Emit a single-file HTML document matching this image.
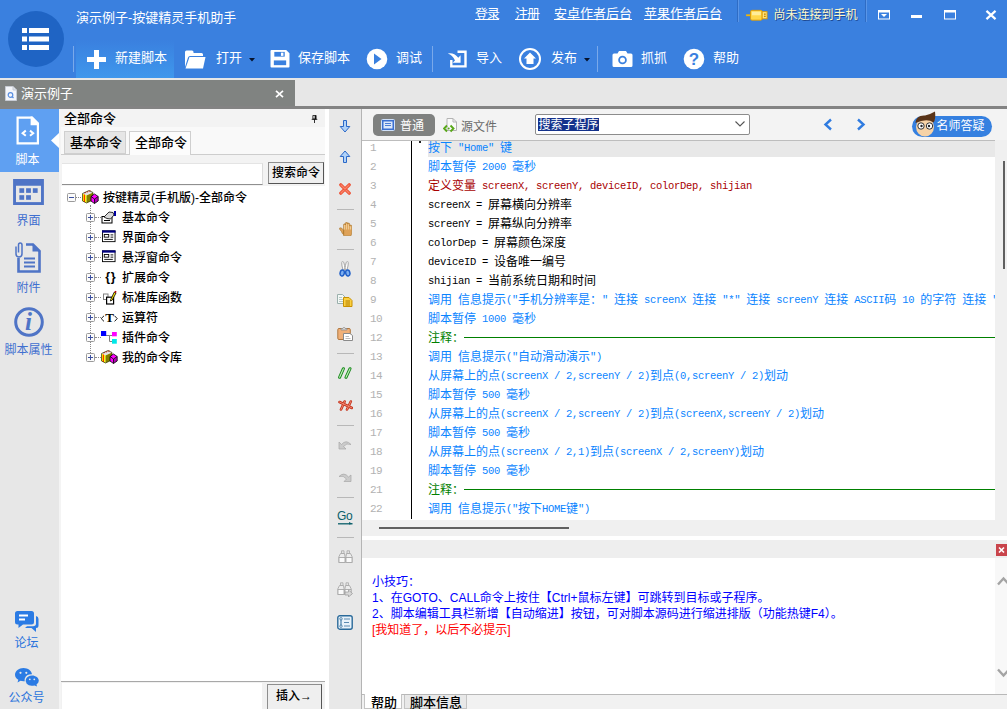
<!DOCTYPE html><html lang="zh-CN"><head><meta charset="utf-8"><title>演示例子-按键精灵手机助手</title><style>
*{box-sizing:border-box;margin:0;padding:0}
html,body{width:1007px;height:709px;overflow:hidden;background:#fff}
body{position:relative;font-family:"Liberation Sans","Noto Sans CJK SC",sans-serif;font-size:12px;color:#000}
.a{position:absolute}
.t{position:absolute;white-space:nowrap;line-height:1}
#top{left:0;top:0;width:1007px;height:78px;background:#3a80df}
.tb{position:absolute;top:51px;font-size:13px;color:#fff;white-space:nowrap;line-height:14px}
.lnk{position:absolute;top:7px;font-size:13px;color:#fff;text-decoration:underline;white-space:nowrap;line-height:14px}
.sep{position:absolute;top:46px;width:1px;height:26px;background:#7aa9ea}
.side{position:absolute;font-size:12px;color:#3f6fd0;white-space:nowrap;line-height:12px;text-align:center;width:57px;left:0}
.tr{position:absolute;font-size:12px;line-height:14px;white-space:nowrap;color:#000;font-weight:500}
.ln{position:absolute;left:370px;width:30px;font-family:"Liberation Mono",monospace;font-size:11px;letter-spacing:-.6px;line-height:19px;color:#b2b2b2;white-space:nowrap}
.cl{position:absolute;left:428px;font-size:12px;line-height:19px;height:19px;white-space:nowrap;font-family:"Liberation Mono","Noto Sans CJK SC",monospace}
.cl i{font-style:normal;position:relative;top:-1px;font-size:10.5px;letter-spacing:-.3px;font-family:"Liberation Mono",monospace}
.cb{color:#0a84ff}.cr{color:#a80000}.ck{color:#000}.cg{color:#008000}
.hl{position:absolute;font-size:12px;line-height:16px;white-space:nowrap;left:372px}
</style></head><body><div id="top" class="a"></div><svg class="a" style="left:7px;top:10px" width="58" height="58" viewBox="0 0 58 58"><circle cx="29" cy="29" r="28" fill="#1f64c4"/><g fill="#fff"><rect x="15" y="18" width="5" height="5"/><rect x="22" y="18" width="20" height="5"/><rect x="15" y="26.5" width="5" height="5"/><rect x="22" y="26.5" width="20" height="5"/><rect x="15" y="35" width="5" height="5"/><rect x="22" y="35" width="20" height="5"/></g></svg><div class="t" style="left:76px;top:10px;font-size:13px;color:#fff;line-height:15px">演示例子-按键精灵手机助手</div><div class="a" style="left:76px;top:40px;width:98px;height:38px;background:linear-gradient(#3a80df,#3f97ec)"></div><div class="sep" style="left:73px"></div><svg class="a" style="left:87px;top:50px" width="19" height="19"><path d="M7 0h5v7h7v5h-7v7h-5v-7h-7v-5h7z" fill="#fff"/></svg><div class="tb" style="left:115px">新建脚本</div><svg class="a" style="left:184px;top:49.5px" width="22" height="19" viewBox="0 0 22 19"><path d="M1 17V2Q1 .5 2.5 .5H8Q9.5 .5 9.5 2V3H17.5Q19 3 19 4.5V6H6Q4.5 6 4 7.5z" fill="#fff"/><path d="M5.5 7H21.5L19 18.5H1.5z" fill="#fff"/></svg><div class="tb" style="left:216px">打开</div><svg class="a" style="left:248.5px;top:57.5px" width="6" height="4"><path d="M0 0h6L3 3.6z" fill="#06122c"/></svg><svg class="a" style="left:269.5px;top:50px" width="20" height="18" viewBox="0 0 21 19"><path d="M1.5 0H17L20.5 3.5V17.5Q20.5 18.5 19.5 18.5H1.5Q.5 18.5 .5 17.5V1Q.5 0 1.5 0z" fill="#fff"/><rect x="4.5" y="2" width="11" height="5" fill="#3a80df"/><rect x="11.5" y="2.8" width="2.6" height="3.4" fill="#fff"/><rect x="4" y="11" width="13" height="5" fill="#3a80df"/></svg><div class="tb" style="left:298px">保存脚本</div><svg class="a" style="left:366px;top:48px" width="22" height="22" viewBox="0 0 22 22"><circle cx="11" cy="11" r="10.3" fill="#fff"/><path d="M8 5.5L15.5 11L8 16.5z" fill="#3a80df"/></svg><div class="tb" style="left:396px">调试</div><div class="sep" style="left:432px"></div><svg class="a" style="left:447px;top:49px" width="21" height="20" viewBox="0 0 21 20"><path d="M10.5 2.7H18.5V17.4H4.3V11" fill="none" stroke="#fff" stroke-width="2.4"/><path d="M13.6 13.8V6.3L11.3 8.8Q6.5 3.2 .8 4.6Q5.5 6.3 8 11.5L5.7 13.8z" fill="#fff"/></svg><div class="tb" style="left:476px">导入</div><svg class="a" style="left:518px;top:47px" width="24" height="24" viewBox="0 0 24 24"><circle cx="12" cy="12" r="10" fill="none" stroke="#fff" stroke-width="2"/><path d="M12 5.5L18 11.5H15.5V17H8.5V11.5H6z" fill="#fff"/></svg><div class="tb" style="left:551px">发布</div><svg class="a" style="left:583.5px;top:57.5px" width="6" height="4"><path d="M0 0h6L3 3.6z" fill="#06122c"/></svg><div class="sep" style="left:597px"></div><svg class="a" style="left:612px;top:50px" width="21" height="18" viewBox="0 0 21 18"><path d="M2 3.5H5.5L7 1H14L15.5 3.5H19Q20.5 3.5 20.5 5V15.5Q20.5 17 19 17H2Q.5 17 .5 15.5V5Q.5 3.5 2 3.5z" fill="#fff"/><circle cx="10.5" cy="10" r="4.3" fill="#3a80df"/><circle cx="10.5" cy="10" r="2.5" fill="#fff"/></svg><div class="tb" style="left:641px">抓抓</div><svg class="a" style="left:683px;top:48px" width="22" height="22" viewBox="0 0 22 22"><circle cx="11" cy="11" r="10.3" fill="#fff"/><text x="11" y="16.5" text-anchor="middle" font-family="Liberation Sans,sans-serif" font-weight="bold" font-size="17" fill="#3a80df">?</text></svg><div class="tb" style="left:713px">帮助</div><div class="lnk" style="left:475px;letter-spacing:-1px">登录</div><div class="lnk" style="left:515px;letter-spacing:-1px">注册</div><div class="lnk" style="left:554px;letter-spacing:0">安卓作者后台</div><div class="lnk" style="left:644px;letter-spacing:0">苹果作者后台</div><div class="a" style="left:737px;top:0;width:1px;height:22px;background:#2f6cc4"></div><div class="a" style="left:738px;top:0;width:1px;height:22px;background:#5a96e8"></div><svg class="a" style="left:746px;top:8.5px" width="22.5" height="12.5" viewBox="0 0 25 14"><rect x="0" y="6" width="6" height="2" fill="#f2b400"/><rect x="5" y="1.5" width="13" height="11" rx="1.5" fill="#ffd84a" stroke="#e09a00" stroke-width="1"/><rect x="6.5" y="3" width="10" height="4" fill="#ffee9a"/><rect x="18" y="3" width="5.5" height="8" fill="#ffe680" stroke="#e09a00" stroke-width="1"/><rect x="20" y="5" width="2" height="1.5" fill="#c88a00"/><rect x="20" y="7.5" width="2" height="1.5" fill="#c88a00"/></svg><div class="t" style="left:773.5px;top:8.5px;font-size:12px;color:#fff8c8;text-shadow:1px 1px 0 #1e4a94;line-height:13px">尚未连接到手机</div><div class="a" style="left:865px;top:0;width:1px;height:22px;background:#2f6cc4"></div><div class="a" style="left:866px;top:0;width:1px;height:22px;background:#5a96e8"></div><svg class="a" style="left:878px;top:10px" width="12" height="10" viewBox="0 0 12 10"><rect x=".5" y=".5" width="11" height="8.5" fill="none" stroke="#fff"/><rect x="0" y="0" width="12" height="2.5" fill="#fff"/><path d="M3 4h6L6 7z" fill="#fff"/></svg><div class="a" style="left:911px;top:15px;width:11px;height:3px;background:#fff"></div><svg class="a" style="left:944px;top:10px" width="12" height="10"><rect x=".5" y=".5" width="11" height="8.5" fill="none" stroke="#fff"/><rect x="0" y="0" width="12" height="2.5" fill="#fff"/></svg><svg class="a" style="left:984.5px;top:9.5px" width="12" height="10" viewBox="0 0 13 11"><path d="M1.5 1L11.5 10M11.5 1L1.5 10" stroke="#fff" stroke-width="2.4"/></svg><div class="a" style="left:0;top:78px;width:1007px;height:28px;background:#e7e7e7"></div><div class="a" style="left:0;top:80px;width:295px;height:27px;background:#808381"></div><div class="a" style="left:0;top:106px;width:1007px;height:3px;background:#838383"></div><svg class="a" style="left:5px;top:86px" width="12" height="15" viewBox="0 0 12 15"><path d="M.5 .5H8L11.5 4V14.5H.5z" fill="#f4f6fa" stroke="#c8ccd4"/><path d="M8 .5V4H11.5" fill="#dde2ea" stroke="#c8ccd4"/><circle cx="5.5" cy="9" r="2.3" fill="none" stroke="#5a8fe0" stroke-width="1.2"/><path d="M7 10.5L8.5 12" stroke="#5a8fe0" stroke-width="1.2"/></svg><div class="t" style="left:21px;top:86px;font-size:13px;color:#fff;line-height:15px">演示例子</div><svg class="a" style="left:275px;top:90px" width="9" height="8" viewBox="0 0 9 8"><path d="M1 .8L8 7.2M8 .8L1 7.2" stroke="#fff" stroke-width="1.7"/></svg><div class="a" style="left:0;top:109px;width:59px;height:600px;background:#e7e7e7"></div><div class="a" style="left:0;top:109px;width:59px;height:63px;background:#5fa0f2"></div><svg class="a" style="left:51px;top:133px" width="8" height="15"><path d="M8 0V15L0 7.5z" fill="#fff"/></svg><svg class="a" style="left:15.5px;top:115.5px" width="24" height="29" viewBox="0 0 24 29"><path d="M1.6 1.6H15.8L21.9 7.7V27.3H1.6z" fill="none" stroke="#fff" stroke-width="2.2"/><path d="M14.6 .5H16.5L23 7V9.3H14.6z" fill="#fff"/><path d="M9.8 14.6L6.6 17.2L9.8 19.8M14 14.6L17.2 17.2L14 19.8" fill="none" stroke="#fff" stroke-width="2"/></svg><div class="side" style="top:153.5px;width:55px;color:#fff">脚本</div><svg class="a" style="left:13px;top:179px" width="31" height="26" viewBox="0 0 32 27"><rect x="1.5" y="1.5" width="29" height="24" fill="none" stroke="#4f74c6" stroke-width="3"/><rect x="1" y="1" width="30" height="6" fill="#4f74c6"/><g fill="#4f74c6"><rect x="6.5" y="9.6" width="5" height="4.8"/><rect x="13.5" y="9.6" width="5" height="4.8"/><rect x="20.5" y="9.6" width="5" height="4.8"/><rect x="6.5" y="16.8" width="5" height="4.8"/><rect x="13.5" y="16.8" width="5" height="4.8"/></g></svg><div class="side" style="top:215px">界面</div><svg class="a" style="left:13px;top:241px" width="30" height="33" viewBox="0 0 30 33"><path d="M13 3.5H20L26.5 10V30.5H5.5V17" fill="none" stroke="#4f74c6" stroke-width="2.6"/><path d="M19.5 2.5V10.5H27.5z" fill="#4f74c6"/><path d="M11 17.5H22M11 21.5H22M11 25.5H22" stroke="#4f74c6" stroke-width="1.8"/><path d="M3 5.5V12.5Q3 16 6 16Q9 16 9 12.5V4Q9 2 7.2 2Q5.5 2 5.5 4V11.5" fill="none" stroke="#4f74c6" stroke-width="1.5"/></svg><div class="side" style="top:282px">附件</div><svg class="a" style="left:13px;top:306px" width="32" height="32" viewBox="0 0 32 32"><circle cx="16" cy="16" r="13.3" fill="none" stroke="#4f74c6" stroke-width="3"/><text x="15.5" y="24" text-anchor="middle" font-family="Liberation Serif,serif" font-style="italic" font-weight="bold" font-size="25" fill="#4f74c6">i</text></svg><div class="side" style="top:344px">脚本属性</div><svg class="a" style="left:15px;top:611px" width="24" height="22" viewBox="0 0 24 22"><path d="M2.5 0H16.5Q19 0 19 2.5V11Q19 13.5 16.5 13.5H8L3.5 17V13.5H2.5Q0 13.5 0 11V2.5Q0 0 2.5 0z" fill="#2b7be4"/><path d="M4 4.5H13M4 8.5H10" stroke="#fff" stroke-width="1.8"/><path d="M21 5Q23.5 5.5 23.5 8V14.5Q23.5 17 21 17V21L16.5 17H10L12 15.2H18Q21 15.2 21 12.5z" fill="#2b7be4"/></svg><div class="side" style="top:637px;width:53px;color:#2b74dc">论坛</div><svg class="a" style="left:15px;top:668px" width="24" height="19" viewBox="0 0 24 19"><path d="M8.5 0C13 0 16.5 2.8 17 6.3Q11.5 6 9.8 10.5Q9.3 12 9.8 13.2Q7.5 13.5 5.5 12.8L2.5 14.5L3.3 11.8Q0 9.8 0 6.8C0 3 3.8 0 8.5 0z" fill="#2b7be4"/><circle cx="5.5" cy="4.8" r="1.1" fill="#e7e7e7"/><circle cx="11.3" cy="4.8" r="1.1" fill="#e7e7e7"/><path d="M17 7.5C20.8 7.5 23.8 9.9 23.8 12.8Q23.8 14.8 21.5 16.4L22 18.6L19.6 17.4Q14.5 18.8 11.7 15.8Q9.8 13.5 11 11C12 8.8 14.3 7.5 17 7.5z" fill="#2b7be4"/><circle cx="14.8" cy="11.3" r=".9" fill="#e7e7e7"/><circle cx="19.3" cy="11.3" r=".9" fill="#e7e7e7"/></svg><div class="side" style="top:692px;width:53px;color:#2b74dc">公众号</div><div class="a" style="left:59px;top:109px;width:2px;height:600px;background:#f4f4f4"></div><div class="a" style="left:61px;top:109px;width:264px;height:18px;background:#f3f3f3"></div><div class="t" style="left:64px;top:112px;font-size:13px;line-height:13px;font-weight:500">全部命令</div><svg class="a" style="left:311px;top:115px" width="7" height="8" viewBox="0 0 8 10"><path d="M2 .5H6V5H2z" fill="none" stroke="#000"/><path d="M5 .5V5" stroke="#000" stroke-width="1.5"/><path d="M.5 5.5H7.5M4 5.5V10" stroke="#000"/></svg><div class="a" style="left:61px;top:127px;width:264px;height:27px;background:#f9f9f9"></div><div class="a" style="left:61px;top:154px;width:264px;height:1px;background:#cdcdcd"></div><div class="a" style="left:64px;top:131px;width:62px;height:23px;background:#e6e6e6;border:1px solid #cfcfcf"></div><div class="t" style="left:70px;top:136px;font-size:13px;line-height:13px;font-weight:500">基本命令</div><div class="a" style="left:129px;top:131px;width:62px;height:24px;background:#fcfcfc;border:1px solid #cfcfcf;border-bottom:none"></div><div class="t" style="left:135px;top:136px;font-size:13px;line-height:13px;font-weight:500">全部命令</div><div class="a" style="left:61px;top:155px;width:264px;height:31px;background:#f3f3f3"></div><div class="a" style="left:62px;top:163px;width:201px;height:22px;background:#fff;border-bottom:1px solid #8f8f8f;border-right:1px solid #dcdcdc;border-top:1px solid #e4e4e4"></div><div class="a" style="left:268px;top:162px;width:56px;height:22px;background:#efefef;border:1px solid #8e8e8e;border-right-color:#555;border-bottom-color:#555"></div><div class="t" style="left:272px;top:167px;font-size:12px;line-height:13px;font-weight:500">搜索命令</div><div class="a" style="left:61px;top:186px;width:264px;height:495px;background:#fff"></div><svg class="a" style="left:67px;top:193px" width="9" height="9" viewBox="0 0 9 9"><rect x=".5" y=".5" width="8" height="8" rx="1" fill="#fbfbfb" stroke="#9a9a9a"/><path d="M2 4.5H7" stroke="#3a4fa0"/></svg><div class="a" style="left:76px;top:197px;width:5px;border-top:1px dotted #888"></div><div class="a" style="left:90px;top:205px;height:152px;border-left:1px dotted #888"></div><svg class="a" style="left:82px;top:190px" width="17" height="14" viewBox="0 0 17 14"><path d="M.5 3.5L7 .5L11 2.5L4.5 5.5z" fill="#e4e4e4"/><path d="M2.5 3L8.5 .8" stroke="#ff2020" stroke-width="1" stroke-dasharray="1.5 1"/><path d="M.5 3.5L4.5 5.5V13L.5 11z" fill="#ffff00"/><path d="M2.3 4.5V12" stroke="#ff0000" stroke-width="1"/><path d="M4.5 5.5L11 2.5V10L4.5 13z" fill="#808000"/><path d="M.5 3.5L7 .5L11 2.5V10L4.5 13L.5 11z" fill="none" stroke="#303000" stroke-width=".7"/><path d="M9 6.5L12.5 4L16.2 6.5L12.5 9z" fill="#ff00ff"/><path d="M9 6.5L12.5 9V13.5L9 11z" fill="#ff00ff"/><path d="M12.5 9L16.2 6.5V11L12.5 13.5z" fill="#b000b0"/><path d="M9 6.5L12.5 4L16.2 6.5V11L12.5 13.5L9 11zM9 6.5L12.5 9L16.2 6.5M12.5 9V13.5" fill="none" stroke="#000" stroke-width=".8"/></svg><div class="tr" style="left:103px;top:191px">按键精灵(手机版)-全部命令</div><svg class="a" style="left:86px;top:213px" width="9" height="9" viewBox="0 0 9 9"><rect x=".5" y=".5" width="8" height="8" rx="1" fill="#fbfbfb" stroke="#9a9a9a"/><path d="M2 4.5H7" stroke="#3a4fa0"/><path d="M4.5 2V7" stroke="#3a4fa0"/></svg><div class="a" style="left:95px;top:217px;width:6px;border-top:1px dotted #888"></div><svg class="a" style="left:101px;top:210px" width="16" height="14" viewBox="0 0 16 14"><rect x="1" y="6.5" width="10" height="6.5" fill="#fff" stroke="#000"/><path d="M3 10.5H9" stroke="#000"/><path d="M3 7L8 2L12 2.5L13 5L9.5 9L6 8.5z" fill="#d8d8d8" stroke="#000" stroke-width=".8"/><rect x="13" y="1" width="2" height="5" fill="#0000a0"/></svg><div class="tr" style="left:122px;top:211px">基本命令</div><svg class="a" style="left:86px;top:233px" width="9" height="9" viewBox="0 0 9 9"><rect x=".5" y=".5" width="8" height="8" rx="1" fill="#fbfbfb" stroke="#9a9a9a"/><path d="M2 4.5H7" stroke="#3a4fa0"/><path d="M4.5 2V7" stroke="#3a4fa0"/></svg><div class="a" style="left:95px;top:237px;width:6px;border-top:1px dotted #888"></div><svg class="a" style="left:102px;top:230px" width="13.5" height="12.5" viewBox="0 0 15 13"><rect x=".5" y=".5" width="14" height="12" fill="#fff" stroke="#000"/><rect x="0" y="0" width="15" height="2.5" fill="#000080"/><rect x="2.5" y="4.5" width="5" height="3" fill="none" stroke="#000"/><path d="M9.5 5H12.5M9.5 7.5H12.5M2.5 10H12" stroke="#000"/></svg><div class="tr" style="left:122px;top:231px">界面命令</div><svg class="a" style="left:86px;top:253px" width="9" height="9" viewBox="0 0 9 9"><rect x=".5" y=".5" width="8" height="8" rx="1" fill="#fbfbfb" stroke="#9a9a9a"/><path d="M2 4.5H7" stroke="#3a4fa0"/><path d="M4.5 2V7" stroke="#3a4fa0"/></svg><div class="a" style="left:95px;top:257px;width:6px;border-top:1px dotted #888"></div><svg class="a" style="left:102px;top:250px" width="13.5" height="12.5" viewBox="0 0 15 13"><rect x=".5" y=".5" width="14" height="12" fill="#fff" stroke="#000"/><rect x="0" y="0" width="15" height="2.5" fill="#000080"/><rect x="2.5" y="4.5" width="5" height="3" fill="none" stroke="#000"/><path d="M9.5 5H12.5M9.5 7.5H12.5M2.5 10H12" stroke="#000"/></svg><div class="tr" style="left:122px;top:251px">悬浮窗命令</div><svg class="a" style="left:86px;top:273px" width="9" height="9" viewBox="0 0 9 9"><rect x=".5" y=".5" width="8" height="8" rx="1" fill="#fbfbfb" stroke="#9a9a9a"/><path d="M2 4.5H7" stroke="#3a4fa0"/><path d="M4.5 2V7" stroke="#3a4fa0"/></svg><div class="a" style="left:95px;top:277px;width:6px;border-top:1px dotted #888"></div><svg class="a" style="left:102px;top:270px" width="16" height="14"><text x="5.8" y="11" text-anchor="middle" font-family="Liberation Sans,sans-serif" font-weight="bold" font-size="12.5" fill="#000">{</text><text x="11.3" y="11" text-anchor="middle" font-family="Liberation Sans,sans-serif" font-weight="bold" font-size="12.5" fill="#000">}</text></svg><div class="tr" style="left:122px;top:271px">扩展命令</div><svg class="a" style="left:86px;top:293px" width="9" height="9" viewBox="0 0 9 9"><rect x=".5" y=".5" width="8" height="8" rx="1" fill="#fbfbfb" stroke="#9a9a9a"/><path d="M2 4.5H7" stroke="#3a4fa0"/><path d="M4.5 2V7" stroke="#3a4fa0"/></svg><div class="a" style="left:95px;top:297px;width:6px;border-top:1px dotted #888"></div><svg class="a" style="left:101px;top:290px" width="16" height="15" viewBox="0 0 16 15"><rect x="2.5" y="4" width="4.5" height="5.5" fill="#fff" stroke="#808080"/><rect x="5.6" y="7.2" width="7" height="6.8" fill="#fff" stroke="#000" stroke-width="1.2"/><path d="M9.6 9.8L13.2 2.2L15 3L11.2 10.2L9.4 11z" fill="#ffe800" stroke="#000" stroke-width=".8"/><path d="M13.2 2.2L15 3L15.6 1.6L14.2 .8z" fill="#b00000"/></svg><div class="tr" style="left:122px;top:291px">标准库函数</div><svg class="a" style="left:86px;top:313px" width="9" height="9" viewBox="0 0 9 9"><rect x=".5" y=".5" width="8" height="8" rx="1" fill="#fbfbfb" stroke="#9a9a9a"/><path d="M2 4.5H7" stroke="#3a4fa0"/><path d="M4.5 2V7" stroke="#3a4fa0"/></svg><div class="a" style="left:95px;top:317px;width:6px;border-top:1px dotted #888"></div><svg class="a" style="left:100px;top:310px" width="18" height="14" viewBox="0 0 18 14"><text x="9.7" y="12" text-anchor="middle" font-family="Liberation Serif,serif" font-weight="bold" font-size="13" fill="#000">T</text><path d="M4 5.8L1.2 8.6L4 11.4M14.6 5.8L17.2 8.6L14.6 11.4" fill="none" stroke="#000" stroke-width=".9"/></svg><div class="tr" style="left:122px;top:311px">运算符</div><svg class="a" style="left:86px;top:333px" width="9" height="9" viewBox="0 0 9 9"><rect x=".5" y=".5" width="8" height="8" rx="1" fill="#fbfbfb" stroke="#9a9a9a"/><path d="M2 4.5H7" stroke="#3a4fa0"/><path d="M4.5 2V7" stroke="#3a4fa0"/></svg><div class="a" style="left:95px;top:337px;width:6px;border-top:1px dotted #888"></div><svg class="a" style="left:101px;top:330px" width="16" height="15" viewBox="0 0 16 15"><path d="M5 5.5H8.5V11.5H11M8.5 5.5H11" fill="none" stroke="#808080"/><rect x="0" y="1" width="5.2" height="5" fill="#0000ff"/><rect x="11" y="2" width="4.8" height="4.3" fill="#ff00ff"/><rect x="11" y="9" width="4.8" height="4.7" fill="#00e8e8"/></svg><div class="tr" style="left:122px;top:331px">插件命令</div><svg class="a" style="left:86px;top:353px" width="9" height="9" viewBox="0 0 9 9"><rect x=".5" y=".5" width="8" height="8" rx="1" fill="#fbfbfb" stroke="#9a9a9a"/><path d="M2 4.5H7" stroke="#3a4fa0"/><path d="M4.5 2V7" stroke="#3a4fa0"/></svg><div class="a" style="left:95px;top:357px;width:6px;border-top:1px dotted #888"></div><svg class="a" style="left:101px;top:350px" width="17" height="14" viewBox="0 0 17 14"><path d="M.5 3.5L7 .5L11 2.5L4.5 5.5z" fill="#e4e4e4"/><path d="M2.5 3L8.5 .8" stroke="#ff2020" stroke-width="1" stroke-dasharray="1.5 1"/><path d="M.5 3.5L4.5 5.5V13L.5 11z" fill="#ffff00"/><path d="M2.3 4.5V12" stroke="#ff0000" stroke-width="1"/><path d="M4.5 5.5L11 2.5V10L4.5 13z" fill="#808000"/><path d="M.5 3.5L7 .5L11 2.5V10L4.5 13L.5 11z" fill="none" stroke="#303000" stroke-width=".7"/><path d="M9 6.5L12.5 4L16.2 6.5L12.5 9z" fill="#ff00ff"/><path d="M9 6.5L12.5 9V13.5L9 11z" fill="#ff00ff"/><path d="M12.5 9L16.2 6.5V11L12.5 13.5z" fill="#b000b0"/><path d="M9 6.5L12.5 4L16.2 6.5V11L12.5 13.5L9 11zM9 6.5L12.5 9L16.2 6.5M12.5 9V13.5" fill="none" stroke="#000" stroke-width=".8"/></svg><div class="tr" style="left:122px;top:351px">我的命令库</div><div class="a" style="left:61px;top:681px;width:264px;height:28px;background:#f1f1f1;border-top:1px solid #a8a8a8"></div><div class="a" style="left:62px;top:683px;width:200px;height:26px;background:#fff"></div><div class="a" style="left:267px;top:684px;width:55px;height:26px;background:#efefef;border:1px solid #8e8e8e;border-right-color:#555"></div><div class="t" style="left:276px;top:690px;font-size:12px;line-height:13px;font-weight:500">插入→</div><div class="a" style="left:325px;top:109px;width:4px;height:600px;background:#fff"></div><div class="a" style="left:329px;top:109px;width:32px;height:600px;background:#e8e8e8"></div><div class="a" style="left:361px;top:109px;width:1px;height:600px;background:#b4b4b4"></div><div class="a" style="left:337px;top:209px;width:17px;height:1px;background:#b8b8b8"></div><div class="a" style="left:337px;top:249px;width:17px;height:1px;background:#b8b8b8"></div><div class="a" style="left:337px;top:353px;width:17px;height:1px;background:#b8b8b8"></div><div class="a" style="left:337px;top:425px;width:17px;height:1px;background:#b8b8b8"></div><div class="a" style="left:337px;top:497px;width:17px;height:1px;background:#b8b8b8"></div><div class="a" style="left:337px;top:537px;width:17px;height:1px;background:#b8b8b8"></div><svg class="a" style="left:339px;top:119.5px" width="12" height="13" viewBox="0 0 12 13"><path d="M4.5 .5H7.5V6.5H10.8L6 12L1.2 6.5H4.5z" fill="#b0d2f8" stroke="#2a68c8"/></svg><svg class="a" style="left:339px;top:150px" width="12" height="13" viewBox="0 0 12 13"><path d="M4.5 12.5H7.5V6.5H10.8L6 1L1.2 6.5H4.5z" fill="#b0d2f8" stroke="#2a68c8"/></svg><svg class="a" style="left:339px;top:183px" width="12" height="12" viewBox="0 0 12 12"><path d="M1.8 1.8L10.2 10.2M10.2 1.8L1.8 10.2" stroke="#ee5236" stroke-width="3.3" stroke-linecap="round"/><path d="M2 2L10 10M10 2L2 10" stroke="#f88468" stroke-width="1.2" stroke-linecap="round"/></svg><svg class="a" style="left:338px;top:222px" width="14" height="14" viewBox="-1 0 14 14"><path d="M4.6 13.8V2.8Q4.6 1.8 5.6 1.8Q6.5 1.8 6.5 2.8V1.2Q6.5 .3 7.5 .3Q8.6 .3 8.6 1.2V2Q8.6 1.1 9.6 1.1Q10.6 1.1 10.6 2V4Q10.6 3.1 11.6 3.1Q12.8 3.1 12.8 4.2V11L12 13.8zM4.6 8.2L2.8 6.2Q1.8 5.6 .6 6V7.2L2.4 9.4L3.3 11.5L4.6 12.5z" fill="#dea258" stroke="#a87428" stroke-width=".6"/><path d="M5.6 3V7.5M7.6 1.8V7.5M9.6 2.4V7.5M11.6 4.4V7.5" stroke="#f4d4a0" stroke-width=".9"/></svg><svg class="a" style="left:339px;top:260.5px" width="12" height="16" viewBox="0 0 12 16"><ellipse cx="4.3" cy="4.8" rx="1.3" ry="4.6" transform="rotate(-9 4.3 4.8)" fill="#fbfbfb" stroke="#9a9a9a" stroke-width=".8"/><ellipse cx="7.7" cy="4.8" rx="1.3" ry="4.6" transform="rotate(9 7.7 4.8)" fill="#fbfbfb" stroke="#9a9a9a" stroke-width=".8"/><ellipse cx="3.2" cy="12" rx="2.1" ry="3" transform="rotate(12 3.2 12)" fill="#7fb0f0" stroke="#1f5fc8" stroke-width="1.5"/><ellipse cx="8.8" cy="12" rx="2.1" ry="3" transform="rotate(-12 8.8 12)" fill="#7fb0f0" stroke="#1f5fc8" stroke-width="1.5"/></svg><svg class="a" style="left:337px;top:294px" width="16" height="13" viewBox="0 0 16 13"><path d="M.5 .5H5.5L8 3V9.5H.5z" fill="#f4f8f6" stroke="#9ab0ac"/><path d="M2 3.5H5M2 5.5H6M2 7.5H6" stroke="#a8bcb8" stroke-width=".8"/><path d="M6.5 3.5H12L15 6.5V12.5H6.5z" fill="#fbd040" stroke="#c89000"/><path d="M8.5 7H13M8.5 9H13M8.5 11H13" stroke="#b07c00" stroke-width="1"/></svg><svg class="a" style="left:337px;top:326.5px" width="16" height="14" viewBox="0 0 16 14"><rect x=".8" y="1.5" width="12.5" height="11" rx="1.2" fill="#f0b078" stroke="#b07840"/><path d="M4 3V1.5H5.5L6.5 .4H7.5L8.5 1.5H10V3z" fill="#d4d4d4" stroke="#888" stroke-width=".7"/><path d="M6.5 6.5H13L15.5 8.5V13.5H6.5z" fill="#fff" stroke="#8a8a8a"/><path d="M8.5 9.5H12M8.5 11.5H13.5" stroke="#b4b4b4" stroke-width=".9"/></svg><svg class="a" style="left:338px;top:367.3px" width="14" height="12" viewBox=".6 0 14 12"><path d="M2.2 10.3L6 1.7M8.6 10.3L12.6 1.7" stroke="#188a1c" stroke-width="3" stroke-linecap="round"/><path d="M2.2 10.3L6 1.7M8.6 10.3L12.6 1.7" stroke="#c4f0bc" stroke-width="1.1" stroke-linecap="round"/></svg><svg class="a" style="left:337.5px;top:400px" width="15" height="11" viewBox="0 0 15 11"><path d="M3 9.5L6.6 1.5M9 9.5L12.8 1.5" stroke="#c43018" stroke-width="2.6" stroke-linecap="round"/><path d="M1.5 2L14 8" stroke="#c43018" stroke-width="2.6" stroke-linecap="round"/><path d="M3 9.5L6.6 1.5M9 9.5L12.8 1.5M1.5 2L14 8" stroke="#f08874" stroke-width="1" stroke-linecap="round"/></svg><svg class="a" style="left:338px;top:440px" width="14" height="10" viewBox="0 0 14 10"><path d="M1 2V9H8L5.5 6.5Q8.5 2.5 13 4.5Q8 -1 3.5 4.5z" fill="#cbcbcb" stroke="#a6a6a6" stroke-width=".7"/></svg><svg class="a" style="left:338px;top:472px" width="14" height="10" viewBox="0 0 14 10"><path d="M13 3V9.5H6L8.5 7Q5.5 3 1 4.5Q6 -.5 10.5 5z" fill="#cbcbcb" stroke="#a6a6a6" stroke-width=".7"/></svg><div class="t" style="left:337px;top:510px;font-size:12px;line-height:12px;color:#0a5f6a;font-family:'Liberation Sans',sans-serif;letter-spacing:-.3px">Go</div><svg class="a" style="left:338px;top:520.5px" width="15" height="5"><path d="M0 2.8H14.5" stroke="#0a5f6a" stroke-width="1.3"/><path d="M11 1L14.5 2.8L11 3.4z" fill="#0a5f6a"/></svg><svg class="a" style="left:337.5px;top:550px" width="15" height="14" viewBox="0 0 15 14"><path d="M3.5 .8H6V3.5H3.5zM9 .8H11.5V3.5H9z" fill="#e4e4e4" stroke="#a8a8a8" stroke-width=".8"/><path d="M2.5 3.5H6.5L7 6.5V12.5H1V6.5zM8.5 3.5H12.5L14 6.5V12.5H8V6.5z" fill="#ececec" stroke="#a8a8a8" stroke-width=".9"/><rect x="1" y="7.5" width="6" height="5" fill="#fafafa" stroke="#a8a8a8" stroke-width=".9"/><rect x="8" y="7.5" width="6" height="5" fill="#fafafa" stroke="#a8a8a8" stroke-width=".9"/></svg><svg class="a" style="left:337px;top:581.5px" width="16" height="15" viewBox="0 0 16 15"><path d="M3.5 .8H6V3.5H3.5zM9 .8H11.5V3.5H9z" fill="#e4e4e4" stroke="#a8a8a8" stroke-width=".8"/><path d="M2.5 3.5H6.5L7 6.5V12.5H1V6.5zM8.5 3.5H12.5L14 6.5V12.5H8V6.5z" fill="#ececec" stroke="#a8a8a8" stroke-width=".9"/><rect x="1" y="7.5" width="6" height="5" fill="#fafafa" stroke="#a8a8a8" stroke-width=".9"/><rect x="8" y="7.5" width="6" height="5" fill="#fafafa" stroke="#a8a8a8" stroke-width=".9"/><path d="M8 10H11.5V8L15.5 11.5L11.5 15V13H8z" fill="#d8d8d8" stroke="#a0a0a0" stroke-width=".8"/></svg><svg class="a" style="left:337px;top:614.5px" width="16" height="15" viewBox="0 0 16 15"><rect x=".8" y=".8" width="14.4" height="13.4" rx="2" fill="#e8f2fa" stroke="#2a6a9a" stroke-width="1.4"/><path d="M4 3.5V11.5" stroke="#2a6a9a"/><circle cx="4" cy="3.8" r="1.2" fill="#fff" stroke="#2a6a9a" stroke-width=".8"/><circle cx="4" cy="11.2" r="1.2" fill="#fff" stroke="#2a6a9a" stroke-width=".8"/><path d="M7 4H13M7 7.5H12M7 11H13" stroke="#5a8ab0" stroke-width="1.2"/></svg><div class="a" style="left:362px;top:109px;width:645px;height:31px;background:#f3f3f3"></div><div class="a" style="left:362px;top:140px;width:645px;height:1px;background:#bdbdbd"></div><div class="a" style="left:373px;top:114px;width:62px;height:22px;background:#7f8180;border-radius:5px"></div><svg class="a" style="left:381px;top:119px" width="14" height="12" viewBox="0 0 14 12"><rect x=".5" y=".5" width="13" height="11" rx="1" fill="#3a6fd0" stroke="#cfe0f8"/><rect x="2.5" y="2.5" width="9" height="7" fill="#dce8fa"/><path d="M4 4.5H10M4 6.5H10" stroke="#3a6fd0" stroke-width=".9"/></svg><div class="t" style="left:400px;top:120px;font-size:12px;line-height:13px;color:#fff">普通</div><svg class="a" style="left:443px;top:117px" width="15" height="17" viewBox="0 0 15 17"><path d="M4 1.5H10L13.5 5V13.5H4z" fill="#fafafa" stroke="#b4b4b4"/><path d="M10 1.5V5H13.5" fill="none" stroke="#b4b4b4"/><path d="M4 8.5L1 11.5L4 14.5M7.5 8.5L10.5 11.5L7.5 14.5" fill="none" stroke="#58a818" stroke-width="1.9"/><circle cx="5.7" cy="11.5" r="1" fill="#58a818"/></svg><div class="t" style="left:461px;top:121px;font-size:12px;line-height:13px;color:#6a6a6a">源文件</div><div class="a" style="left:535px;top:114px;width:215px;height:21px;background:#fff;border:1px solid #8c8c8c;border-radius:2px"></div><div class="a" style="left:538px;top:118px;width:61px;height:13px;background:#14328c"></div><div class="t" style="left:538.5px;top:118.5px;font-size:12px;line-height:12px;color:#fff">搜索子程序</div><svg class="a" style="left:735px;top:121px" width="10" height="6"><path d="M.5 .5L5 5L9.5 .5" fill="none" stroke="#555" stroke-width="1.1"/></svg><svg class="a" style="left:823px;top:118px" width="10" height="13"><path d="M8 1.5L2.5 6.5L8 11.5" fill="none" stroke="#2f7be0" stroke-width="2.4"/></svg><svg class="a" style="left:856px;top:118px" width="10" height="13"><path d="M2 1.5L7.5 6.5L2 11.5" fill="none" stroke="#2f7be0" stroke-width="2.4"/></svg><div class="a" style="left:912px;top:116px;width:80px;height:21px;background:#3580e0;border-radius:10.5px"></div><svg class="a" style="left:913px;top:110px" width="26" height="28" viewBox="0 0 26 28"><ellipse cx="12" cy="17" rx="9" ry="9.5" fill="#f6d2a6"/><path d="M2.5 13Q3 5 12 5.5Q18 4 22 1.5Q23 9 20.5 12.5Q14 8 2.5 13z" fill="#5a3418"/><circle cx="8" cy="16" r="3.2" fill="#fff" stroke="#333" stroke-width="1"/><circle cx="16.5" cy="16" r="3.2" fill="#fff" stroke="#333" stroke-width="1"/><circle cx="8.5" cy="16" r="1.2" fill="#222"/><circle cx="16" cy="16" r="1.2" fill="#222"/></svg><div class="t" style="left:936.5px;top:120px;font-size:12px;line-height:13px;color:#fff">名师答疑</div><div class="a" style="left:362px;top:141px;width:633px;height:379px;background:#fff"></div><div class="a" style="left:428px;top:141px;width:567px;height:16px;background:#e8e8e8"></div><div class="a" style="left:410.7px;top:141px;width:1.6px;height:378px;background:#000"></div><div class="a" style="left:419px;top:141px;width:2px;height:2px;background:#222"></div><div class="ln" style="top:139px">1</div><div class="cl cb" style="top:140px">按下<i> "Home" </i>键</div><div class="ln" style="top:158px">2</div><div class="cl cb" style="top:159px">脚本暂停<i> 2000 </i>毫秒</div><div class="ln" style="top:177px">3</div><div class="cl cr" style="top:178px">定义变量<i> screenX, screenY, deviceID, colorDep, shijian</i></div><div class="ln" style="top:196px">4</div><div class="cl ck" style="top:197px"><i>screenX = </i>屏幕横向分辨率</div><div class="ln" style="top:215px">5</div><div class="cl ck" style="top:216px"><i>screenY = </i>屏幕纵向分辨率</div><div class="ln" style="top:234px">6</div><div class="cl ck" style="top:235px"><i>colorDep = </i>屏幕颜色深度</div><div class="ln" style="top:253px">7</div><div class="cl ck" style="top:254px"><i>deviceID = </i>设备唯一编号</div><div class="ln" style="top:272px">8</div><div class="cl ck" style="top:273px"><i>shijian = </i>当前系统日期和时间</div><div class="ln" style="top:291px">9</div><div class="cl cb" style="top:292px">调用<i> </i>信息提示<i>("</i>手机分辨率是：<i>" </i>连接<i> screenX </i>连接<i> "*" </i>连接<i> screenY </i>连接<i> ASCII</i>码<i> 10 </i>的字符<i> </i>连接<i> "</i></div><div class="ln" style="top:310px">10</div><div class="cl cb" style="top:311px">脚本暂停<i> 1000 </i>毫秒</div><div class="ln" style="top:329px">12</div><div class="cl cg" style="top:330px">注释：</div><div class="a" style="left:464px;top:337px;width:531px;height:1px;background:#008000"></div><div class="ln" style="top:348px">13</div><div class="cl cb" style="top:349px">调用<i> </i>信息提示<i>("</i>自动滑动演示<i>")</i></div><div class="ln" style="top:367px">14</div><div class="cl cb" style="top:368px">从屏幕上的点<i>(screenX / 2,screenY / 2)</i>到点<i>(0,screenY / 2)</i>划动</div><div class="ln" style="top:386px">15</div><div class="cl cb" style="top:387px">脚本暂停<i> 500 </i>毫秒</div><div class="ln" style="top:405px">16</div><div class="cl cb" style="top:406px">从屏幕上的点<i>(screenX / 2,screenY / 2)</i>到点<i>(screenX,screenY / 2)</i>划动</div><div class="ln" style="top:424px">17</div><div class="cl cb" style="top:425px">脚本暂停<i> 500 </i>毫秒</div><div class="ln" style="top:443px">18</div><div class="cl cb" style="top:444px">从屏幕上的点<i>(screenX / 2,1)</i>到点<i>(screenX / 2,screenY)</i>划动</div><div class="ln" style="top:462px">19</div><div class="cl cb" style="top:463px">脚本暂停<i> 500 </i>毫秒</div><div class="ln" style="top:481px">21</div><div class="cl cg" style="top:482px">注释：</div><div class="a" style="left:464px;top:489px;width:531px;height:1px;background:#008000"></div><div class="ln" style="top:500px">22</div><div class="cl cb" style="top:501px">调用<i> </i>信息提示<i>("</i>按下<i>HOME</i>键<i>")</i></div><div class="a" style="left:995px;top:140px;width:12px;height:396px;background:#f0f0f0"></div><div class="a" style="left:1003px;top:161px;width:2px;height:108px;background:#606060"></div><div class="a" style="left:362px;top:520px;width:645px;height:16px;background:#f0f0f0"></div><div class="a" style="left:379px;top:527px;width:190px;height:2px;background:#606060"></div><div class="a" style="left:362px;top:536px;width:645px;height:4px;background:#fff"></div><div class="a" style="left:362px;top:540px;width:645px;height:18px;background:#eeeeee"></div><div class="a" style="left:996px;top:544px;width:11px;height:12px;background:#c9444b"></div><svg class="a" style="left:998px;top:546px" width="7" height="8"><path d="M1 1.5L6 6.5M6 1.5L1 6.5" stroke="#fff" stroke-width="1.6"/></svg><div class="a" style="left:362px;top:558px;width:633px;height:136px;background:#fff"></div><div class="a" style="left:995px;top:558px;width:12px;height:136px;background:#f8f8f8"></div><svg class="a" style="left:997px;top:576px" width="11" height="10"><path d="M1 8.5L6.5 2.5L12 8.5" fill="none" stroke="#a4a4a4" stroke-width="2.4"/></svg><svg class="a" style="left:997px;top:667.5px" width="11" height="10"><path d="M1 1.5L6.5 7.5L12 1.5" fill="none" stroke="#a4a4a4" stroke-width="2.4"/></svg><div class="hl" style="top:574px;color:#0000ff">小技巧：</div><div class="hl" style="top:590px;color:#0000ff">1、在GOTO、CALL命令上按住【Ctrl+鼠标左键】可跳转到目标或子程序。</div><div class="hl" style="top:606px;color:#0000ff">2、脚本编辑工具栏新增【自动缩进】按钮，可对脚本源码进行缩进排版（功能热键F4）。</div><div class="hl" style="top:622px;color:#ff0000">[我知道了，以后不必提示]</div><div class="a" style="left:362px;top:694px;width:645px;height:15px;background:#f1f1f1;border-top:1px solid #b8b8b8"></div><div class="a" style="left:364px;top:694px;width:38px;height:15px;background:#fff;border:1px solid #c4c4c4;border-top:none"></div><div class="t" style="left:371px;top:696px;font-size:13px;line-height:13px;font-weight:500">帮助</div><div class="a" style="left:404px;top:695px;width:63px;height:14px;background:#e8e8e8;border:1px solid #c4c4c4;border-top:none"></div><div class="t" style="left:410px;top:696px;font-size:13px;line-height:13px;font-weight:500">脚本信息</div></body></html>
